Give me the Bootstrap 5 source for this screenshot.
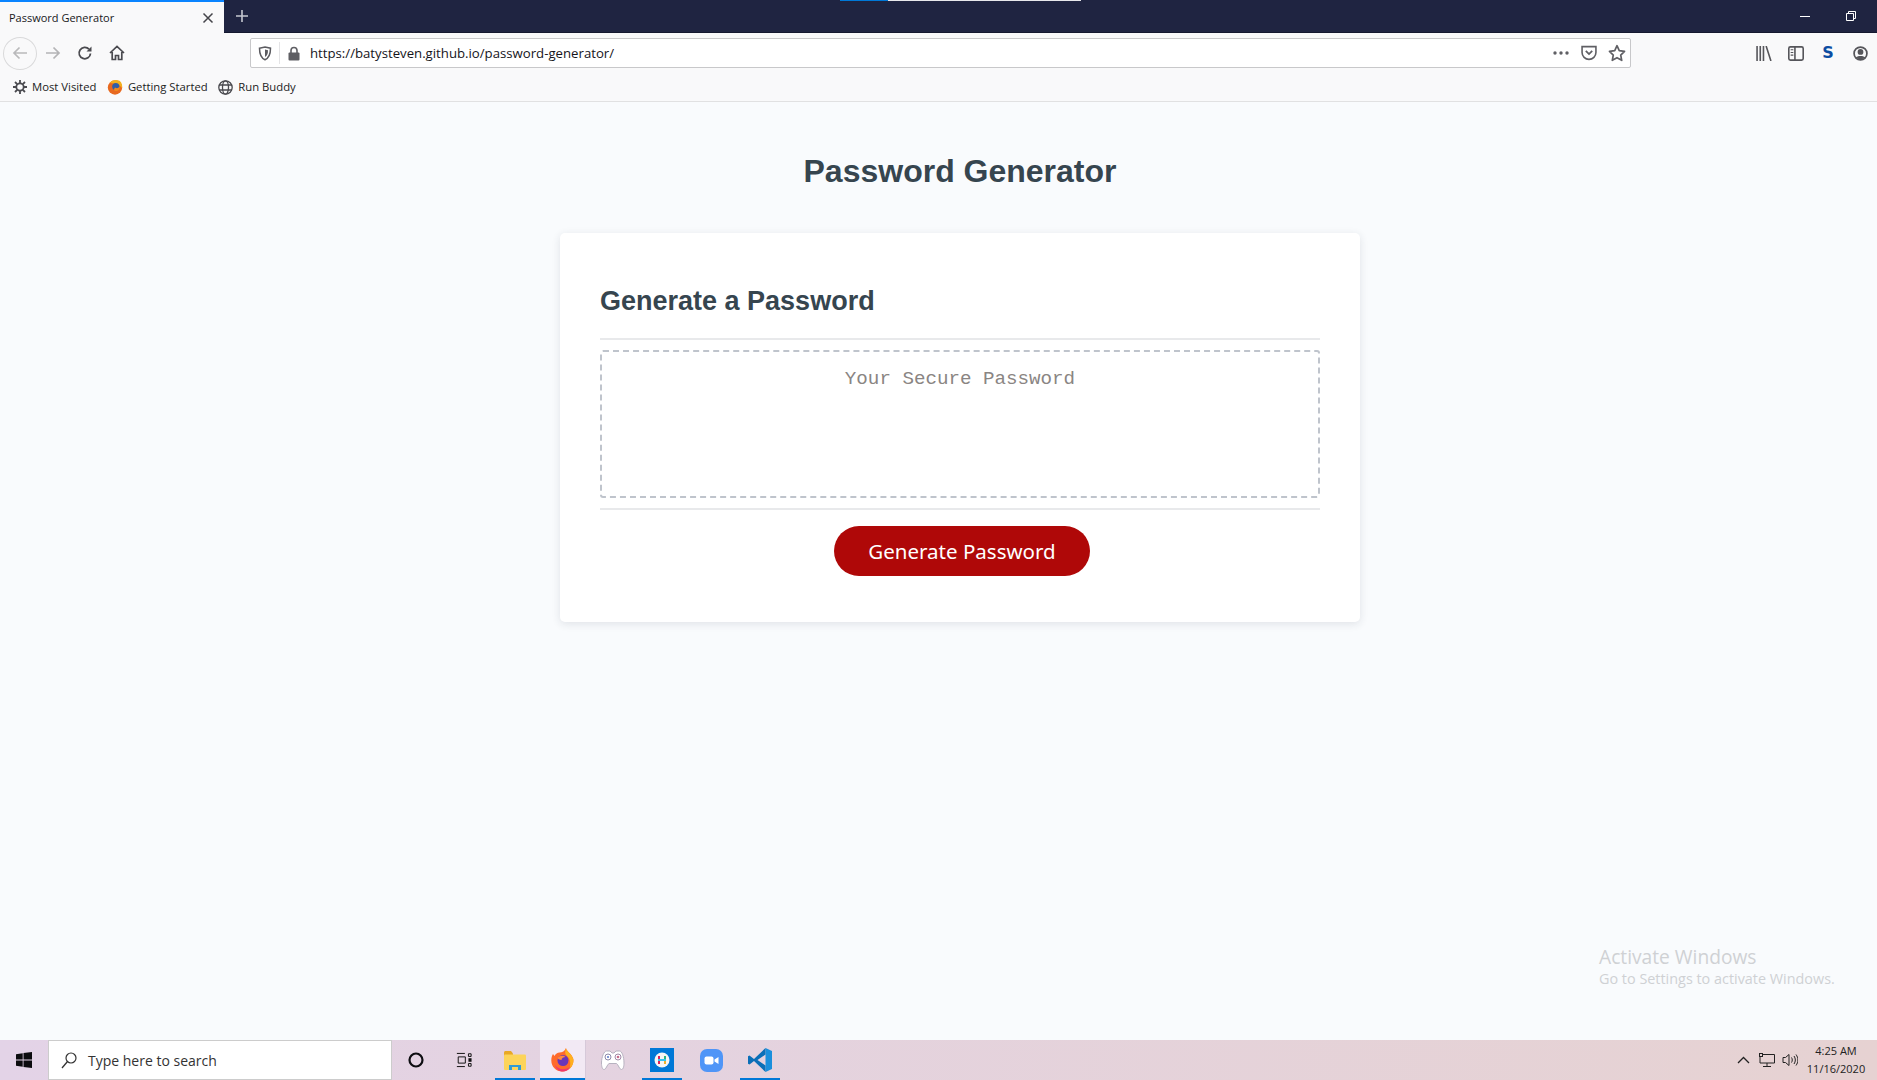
<!DOCTYPE html>
<html lang="en">
<head>
<meta charset="utf-8">
<title>Password Generator</title>
<link rel="stylesheet" href="https://cdn.jsdelivr.net/npm/bootstrap@5.3.0/dist/css/bootstrap.min.css">
<style>
html,body{height:1080px;overflow:hidden}
body{width:1877px;background:#f9fbfd;font-family:"Open Sans","Noto Sans",sans-serif;color:#212529}
svg{display:block;flex:none}
.chrome-title{height:33px;background:#1f2441;border-bottom:1px solid #14182f}
.tab-live{width:224px;height:33px;background:#f9f9fa;border-top:2px solid #0a84ff;padding:0 10px 0 9px;font-size:11px;color:#18181a}
.tab-label{padding-top:2px}
.tab-new{width:36px;height:32px}
.load-bar{position:absolute;top:0;left:840px;height:1px;width:241px;background:#e8e8ec}
.load-bar::before{content:"";position:absolute;left:0;top:0;height:1px;width:48px;background:#0078d7}
.win-btns{margin-left:auto;height:32px;gap:36px;padding-right:21px}
.tool-row{height:37px;background:#f9f9fa;padding-top:3px}
.nav-ico{width:32px;height:32px}
.back-ring{margin-left:3px;width:34px;height:33px;border:1px solid #d9d9da;border-radius:50%}
.url-box{margin-left:117px;width:1381px;height:30px;background:#fff;border:1px solid #c8c8ca;border-radius:2px;font-size:13.2px;color:#15141a}
.url-label{margin-left:9px;padding-top:2px}
.url-sep{width:1px;height:22px;background:#e4e4e6}
.url-cell{width:28px}
.url-end{margin-left:auto;margin-right:-1px}
.right-ico{margin-left:auto;padding-right:1px}
.side-cell{width:32px}
.mark-row{height:32px;background:#f9f9fa;border-bottom:1px solid #e1e1e2;font-size:11.3px;padding:3px 0 0 13px;gap:10.500px;color:#222}
.mark-item{gap:5px}
.page-area{flex:1 1 auto;position:relative;min-height:0;width:1920px;max-width:none}
.page-h1{font-family:"Liberation Sans",Arial,sans-serif;font-weight:700;font-size:32px;color:#36454f;line-height:38px;margin:0;padding-top:50px;text-align:center;height:131px}
.gen-card{width:800px;height:389px;margin:0 auto;background:#fff;border:0;border-radius:5px;box-shadow:0 2px 8px rgba(40,50,70,.12);padding:0 40px}
.gen-head{height:107px;border-bottom:2px solid #e8e9eb;margin:0;padding-top:51px;font-family:"Liberation Sans",Arial,sans-serif;font-weight:700;font-size:27px;line-height:34px;color:#36454f}
.gen-text{display:block;width:100%;height:148px;margin:10px 0;border:2px dashed #bfc4cc;border-radius:3px;resize:none;outline:0;text-align:center;padding:16px 8px;background:#fff;font-family:"Liberation Mono","Courier New",monospace;font-size:19.2px;line-height:22px}
.gen-text::placeholder{color:#8a8583;opacity:1}
.gen-foot{border-top:2px solid #e8e9eb;padding-top:16px}
.gen-btn{width:256px;height:50px;margin-left:234px;background:#af0808;color:#fff;border:0;border-radius:25px;font-family:"Noto Sans","Open Sans",sans-serif;font-size:20.5px;line-height:50px;padding:0}
.gen-btn:hover{background:#af0808;color:#fff}
.activate{position:absolute;left:1599px;top:947px;color:#cfd1d4;font-family:"Open Sans",sans-serif;line-height:1}
.activate-a{font-size:19.2px;margin-bottom:6px}
.activate-b{font-size:14.4px}
.task-row{height:40px;background:linear-gradient(90deg,#e3d3e7,#e6d2d2);position:relative}
.start-cell{width:48px}
.search-cell{width:344px;height:40px;background:#fff;border:1px solid #ccc;padding-left:12px;gap:11px;font-size:14px;color:#333}
.task-cell{width:48px;height:40px;position:relative}
.task-on::after{content:"";position:absolute;left:0;right:0;bottom:0;height:2px;background:#0078d7}
.task-act{background:#f2e9f4;width:45px}
.task-gap{width:5px;height:40px;border-left:1px solid #d6c9d9}
.task-mid{width:40px}
.tray{margin-left:auto;gap:7px;padding-right:10px}
.clock{font-size:11px;line-height:18px;text-align:center;width:62px;color:#222}
</style>
</head>
<body class="d-flex flex-column">

<div class="chrome-title d-flex align-items-start position-relative">
  <div class="tab-live d-flex align-items-center justify-content-between">
    <span class="tab-label">Password Generator</span>
    <svg width="12" height="12" viewBox="0 0 12 12"><path d="M1.500 1.500l9 9m0-9l-9 9" stroke="#45454a" stroke-width="1.500"/></svg>
  </div>
  <div class="tab-new d-flex align-items-center justify-content-center">
    <svg width="14" height="14" viewBox="0 0 14 14"><path d="M7 1v12M1 7h12" stroke="#c5c7d0" stroke-width="1.600"/></svg>
  </div>
  <div class="load-bar"></div>
  <div class="win-btns d-flex align-items-center">
    <svg width="10" height="10" viewBox="0 0 10 10"><path d="M0 5.500h10" stroke="#fff"/></svg>
    <svg width="10" height="10" viewBox="0 0 10 10"><path d="M.5 2.500h7v7h-7zM2.500 2.500v-2h7v7h-2" fill="none" stroke="#fff"/></svg>
  </div>
</div>

<div class="tool-row d-flex align-items-center">
  <div class="back-ring d-flex align-items-center justify-content-center">
    <svg width="16" height="14" viewBox="0 0 16 14"><path d="M15 7H2M7.500 1.500L2 7l5.500 5.500" fill="none" stroke="#b9b9bb" stroke-width="1.700"/></svg>
  </div>
  <div class="nav-ico d-flex align-items-center justify-content-center">
    <svg width="16" height="14" viewBox="0 0 16 14"><path d="M1 7h13M8.500 1.500L14 7l-5.500 5.500" fill="none" stroke="#b4b4b6" stroke-width="1.700"/></svg>
  </div>
  <div class="nav-ico d-flex align-items-center justify-content-center">
    <svg width="16" height="16" viewBox="0 0 16 16"><path d="M13.500 8.500A5.700 5.700 0 1 1 12 4.200" fill="none" stroke="#4a4a4f" stroke-width="1.800"/><path d="M14.500 1.500v5h-5z" fill="#4a4a4f"/></svg>
  </div>
  <div class="nav-ico d-flex align-items-center justify-content-center">
    <svg width="16" height="16" viewBox="0 0 16 16"><path d="M1 8l7-6.500L15 8M3.200 7v7.500h3.300v-4h3v4h3.300V7" fill="none" stroke="#4a4a4f" stroke-width="1.700"/></svg>
  </div>
  <div class="url-box d-flex align-items-center">
    <div class="d-flex align-items-center justify-content-center" style="width:24px;margin-left:2px"><svg width="14" height="15" viewBox="0 0 14 15"><path d="M1.500 2.200L7 1l5.500 1.200c0 5-1 9.500-5.500 11.500C2.500 11.700 1.500 7.200 1.500 2.200z" fill="none" stroke="#5b5b60" stroke-width="1.500"/><path d="M7 3.500l3 .7c0 3-.6 5.500-3 6.800z" fill="#5b5b60"/></svg></div>
    <div class="url-sep" style="margin:0 7px 0 2px"></div>
    <svg width="14" height="15" viewBox="0 0 14 15"><path d="M4 7V4.500a3 3 0 0 1 6 0V7" fill="none" stroke="#5f5f64" stroke-width="1.600"/><rect x="1.500" y="6.500" width="11" height="8" rx="1" fill="#5f5f64"/></svg>
    <span class="url-label">https://batysteven.github.io/password-generator/</span>
    <div class="url-end d-flex align-items-center">
      <div class="url-cell d-flex justify-content-center"><svg width="16" height="4" viewBox="0 0 16 4"><circle cx="2" cy="2" r="1.700" fill="#5f5f64"/><circle cx="8" cy="2" r="1.700" fill="#5f5f64"/><circle cx="14" cy="2" r="1.700" fill="#5f5f64"/></svg></div>
      <div class="url-cell d-flex justify-content-center"><svg width="16" height="16" viewBox="0 0 15 15"><path d="M1 1.500h13v5.500a6.500 6.500 0 0 1-13 0z" fill="none" stroke="#5f5f64" stroke-width="1.500"/><path d="M4.500 5.500l3 3 3-3" fill="none" stroke="#5f5f64" stroke-width="1.700"/></svg></div>
      <div class="url-cell d-flex justify-content-center"><svg width="18" height="18" viewBox="0 0 16 16"><path d="M8 1.500l2 4.400 4.700.6-3.400 3.300.9 4.700L8 12.200l-4.200 2.300.9-4.700L1.300 6.500 6 5.900z" fill="none" stroke="#5f5f64" stroke-width="1.500" stroke-linejoin="round"/></svg></div>
    </div>
  </div>
  <div class="right-ico d-flex align-items-center">
    <div class="side-cell d-flex justify-content-center"><svg width="16" height="15" viewBox="0 0 15 14"><path d="M1 0v14M4 0v14M7 0v14M9.500 0l4.500 14" stroke="#55555a" stroke-width="1.500" fill="none"/></svg></div>
    <div class="side-cell d-flex justify-content-center"><svg width="16" height="15" viewBox="0 0 15 14"><rect x=".75" y=".75" width="13.500" height="12.500" rx="1.500" fill="none" stroke="#55555a" stroke-width="1.500"/><path d="M6.500 1v12" stroke="#55555a" stroke-width="1.500"/><path d="M2.500 3.500h2.500M2.500 6h2.500M2.500 8.500h2.500" stroke="#55555a"/></svg></div>
    <div class="side-cell d-flex justify-content-center"><span style="font:900 16px/1 'DejaVu Sans',sans-serif;color:#0c4da2">S</span></div>
    <div class="side-cell d-flex justify-content-center"><svg width="15" height="15" viewBox="0 0 14 14"><circle cx="7" cy="7" r="6" fill="none" stroke="#55555a" stroke-width="1.600"/><circle cx="7" cy="5.500" r="2.700" fill="#55555a"/><path d="M2.500 11c1-2.300 8-2.300 9 0L7 13z" fill="#55555a"/></svg></div>
  </div>
</div>

<div class="mark-row d-flex align-items-center">
  <div class="mark-item d-flex align-items-center">
    <svg width="14" height="14" viewBox="0 0 14 14"><circle cx="7" cy="7" r="3.700" fill="none" stroke="#4a4a4f" stroke-width="1.800"/><path d="M7 0v3M7 11v3M0 7h3M11 7h3M2 2l2.200 2.200M9.800 9.800L12 12M12 2L9.800 4.200M4.200 9.800L2 12" stroke="#4a4a4f" stroke-width="1.800"/></svg>
    <span>Most Visited</span>
  </div>
  <div class="mark-item d-flex align-items-center">
    <svg width="16" height="16" viewBox="0 0 16 16"><circle cx="8" cy="8.500" r="7.200" fill="#e8691f"/><path d="M3 4C4 1.500 9 .2 12.500 1.800 15 3.500 15.500 7 15 9 13 6 9 4.500 3 4z" fill="#f2b01e"/><circle cx="8.800" cy="7.500" r="3.600" fill="#2f5ea8"/><path d="M8 8.500c2 1.500 4 .5 4.800-1.500.5 3-1.500 5-4 5-1.500 0-2.500-1.500-.8-3.500z" fill="#f08a1d"/></svg>
    <span>Getting Started</span>
  </div>
  <div class="mark-item d-flex align-items-center">
    <svg width="15" height="15" viewBox="0 0 15 15"><g fill="none" stroke="#4a4a4f" stroke-width="1.300"><circle cx="7.500" cy="7.500" r="6.700"/><ellipse cx="7.500" cy="7.500" rx="3" ry="6.700"/><path d="M1 5h13M1 10h13"/></g></svg>
    <span>Run Buddy</span>
  </div>
</div>

<main class="page-area">
  <h1 class="page-h1">Password Generator</h1>
  <div class="card gen-card">
    <h2 class="gen-head">Generate a Password</h2>
    <textarea class="gen-text" placeholder="Your Secure Password" readonly></textarea>
    <div class="gen-foot">
      <button type="button" class="btn gen-btn">Generate Password</button>
    </div>
  </div>
</main>
<div class="activate">
  <div class="activate-a">Activate Windows</div>
  <div class="activate-b">Go to Settings to activate Windows.</div>
</div>

<footer class="task-row d-flex align-items-center">
  <div class="start-cell d-flex align-items-center justify-content-center">
    <svg width="16" height="16" viewBox="0 0 16 16"><path d="M0 2.300l6.700-1v6.200H0zM7.500 1.100L16 0v7.500H7.500zM0 8.500h6.700v6.200l-6.700-1zM7.500 8.500H16V16l-8.500-1.100z" fill="#0b0b0e"/></svg>
  </div>
  <div class="search-cell d-flex align-items-center">
    <svg width="16" height="17" viewBox="0 0 16 17"><circle cx="10" cy="6" r="5" fill="none" stroke="#333" stroke-width="1.200"/><path d="M6.500 9.500L1 16" stroke="#333" stroke-width="1.300"/></svg>
    <span>Type here to search</span>
  </div>
  <div class="task-cell d-flex align-items-center justify-content-center">
    <svg width="16" height="16" viewBox="0 0 16 16"><circle cx="8" cy="8" r="6.500" fill="none" stroke="#0e0e12" stroke-width="2.200"/></svg>
  </div>
  <div class="task-cell d-flex align-items-center justify-content-center">
    <svg width="16" height="16" viewBox="0 0 18 16"><path d="M1 .6h9M1 15.400h9M2.500 4.500h8v7h-8zM14 1h3v3h-3zM14 12h3v3h-3z" fill="none" stroke="#111" stroke-width="1.100"/><rect x="14" y="6" width="3.500" height="4" fill="#111"/></svg>
  </div>
  <div class="task-cell task-mid task-on d-flex align-items-center justify-content-center" style="margin:0 5px 0 7px">
    <svg width="22" height="19" viewBox="0 0 22 19"><path d="M0 1.500C0 .7.700 0 1.500 0H7l2 2.500V6H0z" fill="#e8a825"/><rect y="3.500" width="22" height="15.500" rx="1" fill="#fcd45a"/><path d="M5 19v-5h12v5h-3v-3H8v3z" fill="#2e9bd4"/></svg>
  </div>
  <div class="task-cell task-on task-act d-flex align-items-center justify-content-center">
    <svg width="23" height="24" viewBox="0 0 23 24"><path d="M15 0c0 3 6 6 7.300 11 1 6-4 12.500-10.800 12.500C5 23.500.3 18.700.3 12.500.3 9.500 1 7.500 2 6l1.500 2c1-2 3-3.500 5-3.500C11 4.500 14 3 15 0z" fill="#ff6a2b"/><path d="M15 0c0 3 6 6 7.300 11 .7 4-1.300 8-4.300 10.500C20 17 20 11 15.500 7.500 13.500 5.500 14 3 15 0z" fill="#ffb01f"/><path d="M4 17c3 5 11 5.500 15.500 1.500-2 4-5 5-8 5-3.500 0-6.500-2.500-7.500-6.500z" fill="#f0386b"/><circle cx="12" cy="12.500" r="5.500" fill="#6a35b8"/><path d="M6.500 10c2-2.500 6-3 8-1-2 0-4 1-4 3-1.500-.5-3-.5-4-2z" fill="#ff8a3d"/></svg>
  </div>
  <div class="task-gap"></div>
  <div class="task-cell d-flex align-items-center justify-content-center" style="width:46px">
    <svg width="24" height="22" viewBox="0 0 24 22"><path d="M5.500 2h3.500l2 2h2l2-2h3.500c2.500 0 4.500 6 4.500 12 0 4-1 6.500-2.500 6.500-2 0-3-4.500-5-6H8c-2 1.500-3 6-5 6-1.500 0-2.500-2.500-2.500-6.500C.5 8 3 2 5.500 2z" fill="#fff" stroke="#b7b2c0"/><circle cx="7" cy="8" r="3" fill="none" stroke="#8d8aa8"/><circle cx="17" cy="8" r="3" fill="none" stroke="#a08aa8"/><circle cx="17" cy="8" r="1.300" fill="#c96d8d"/><circle cx="7" cy="8" r="1" fill="#5a78c8"/></svg>
  </div>
  <div class="task-cell task-mid task-on d-flex align-items-center justify-content-center" style="margin-left:6px">
    <svg width="24" height="24" viewBox="0 0 24 24"><rect width="24" height="24" fill="#0078d7"/><circle cx="12" cy="12" r="7.500" fill="#f6f6f4"/><path d="M9 8v3M9 13v3" stroke="#e01e5a" stroke-width="2"/><path d="M15 8v3" stroke="#2eb67d" stroke-width="2"/><path d="M15 13v3" stroke="#ecb22e" stroke-width="2"/><path d="M8 12h8" stroke="#36c5f0" stroke-width="2"/></svg>
  </div>
  <div class="task-cell d-flex align-items-center justify-content-center" style="width:58px">
    <svg width="23" height="23" viewBox="0 0 23 23"><rect width="23" height="23" rx="7" fill="#4f95f7"/><rect x="4.500" y="7.500" width="9" height="8" rx="2" fill="#fff"/><path d="M14.500 10.500l4-2.500v7l-4-2.500z" fill="#fff"/></svg>
  </div>
  <div class="task-cell task-mid task-on d-flex align-items-center justify-content-center">
    <svg width="24" height="24" viewBox="0 0 24 24"><path d="M17.500 0L24 3v18l-6.500 3z" fill="#1a8fdc"/><path d="M17.500 0L6 11 1.500 7.500 0 8.300V15.700l1.500.8L6 13l11.500 11V17.500L9.500 12l8-5.500z" fill="#0a6fb8"/></svg>
  </div>
  <div class="tray d-flex align-items-center">
    <svg width="13" height="8" viewBox="0 0 13 8" style="margin-right:2px"><path d="M1 7l5.500-5.500L12 7" fill="none" stroke="#222" stroke-width="1.300"/></svg>
    <svg width="16" height="14" viewBox="0 0 16 14"><path d="M3.500 1.500H15.500V10H1V4M8 10v3M4 13.500h8" fill="none" stroke="#222"/><rect x=".5" y=".5" width="3" height="3" fill="none" stroke="#222"/></svg>
    <svg width="16" height="14" viewBox="0 0 16 14"><path d="M1 4.500h2.500L7 1.500v11L3.500 9.500H1zM9.500 4.500c1 1.500 1 3.500 0 5M12 3c1.800 2.500 1.800 5.500 0 8M14 1.500c2.500 3.500 2.500 7.500 0 11" fill="none" stroke="#222"/></svg>
    <div class="clock">4:25 AM<br>11/16/2020</div>
  </div>
</footer>

<script src="https://cdn.jsdelivr.net/npm/bootstrap@5.3.0/dist/js/bootstrap.bundle.min.js"></script>
</body>
</html>
